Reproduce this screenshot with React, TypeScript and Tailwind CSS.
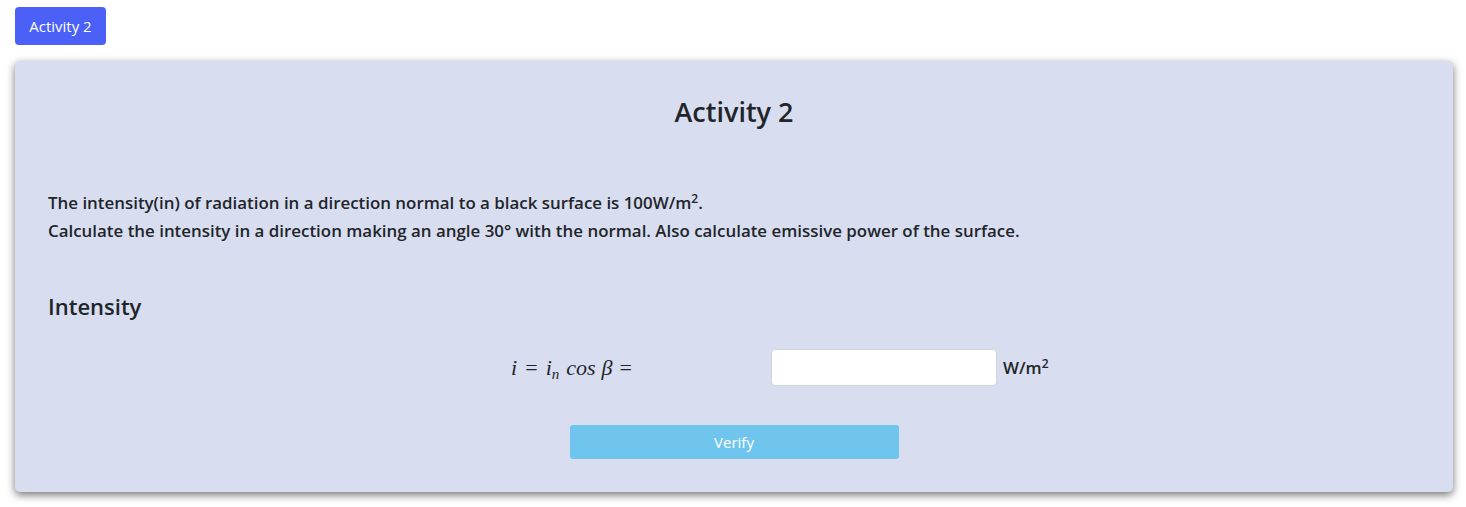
export default function App() {
  return (
    <div className="min-h-[507px] bg-white pl-[15px] pr-[13px] pt-[7px] font-['Open_Sans',sans-serif] text-[#212529]">
      {/* tab button */}
      <button className="h-[38px] w-[91px] rounded-[4px] bg-[#4a60f7] text-[15px] text-white">
        Activity 2
      </button>

      {/* card */}
      <div className="mt-[16px] h-[431px] rounded-[5px] bg-[#d8def0] px-[33px] shadow-[0_3px_8px_rgba(0,0,0,0.55)]">
        <h2 className="pt-[33px] text-center text-[27px] font-semibold leading-[36px]">Activity 2</h2>

        <div className="mt-[59px] text-[16.9px] font-semibold leading-[28px]">
          <p>
            The intensity(in) of radiation in a direction normal to a black surface is 100W/m<sup className="text-[12px]">2</sup>.
          </p>
          <p>Calculate the intensity in a direction making an angle 30° with the normal. Also calculate emissive power of the surface.</p>
        </div>

        <h3 className="mt-[46px] text-[22px] font-semibold leading-[30px]">Intensity</h3>

        <div className="mt-[28px] flex items-center">
          <div className="flex w-[723px] items-baseline justify-end pr-[139px] font-['Liberation_Serif',serif] text-[22px] italic">
            <span>i</span>
            <span className="px-[8px] not-italic">=</span>
            <span>
              i<sub className="text-[15px]">n</sub>
            </span>
            <span className="ml-[7px]">cos</span>
            <span className="ml-[6px]">β</span>
            <span className="pl-[7px] not-italic">=</span>
          </div>
          <input
            type="text"
            className="h-[37px] w-[226px] rounded-[4px] border border-[#d0d4dc] bg-white px-2 outline-none"
          />
          <span className="ml-[6px] text-[16.9px] font-semibold">
            W/m<sup className="text-[12px]">2</sup>
          </span>
        </div>

        <div className="mt-[39px] flex justify-center">
          <button className="h-[34px] w-[329px] rounded-[3px] bg-[#6fc5ee] text-[15px] text-white">Verify</button>
        </div>
      </div>
    </div>
  );
}
